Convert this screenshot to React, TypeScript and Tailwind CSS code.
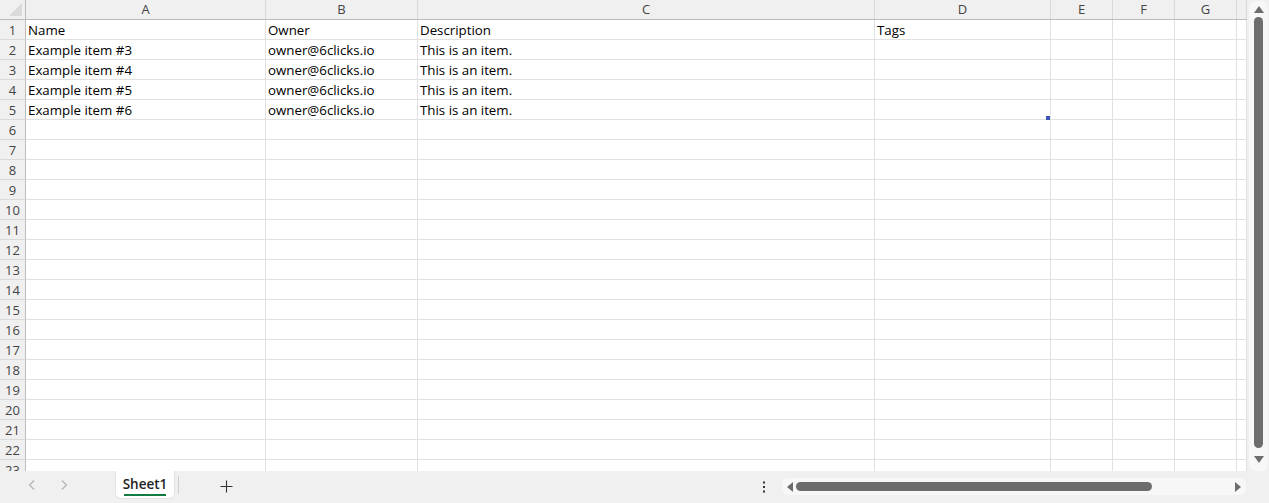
import React from "react";

const cols = [
  { l: "A", w: 240 },
  { l: "B", w: 152 },
  { l: "C", w: 457 },
  { l: "D", w: 176 },
  { l: "E", w: 62 },
  { l: "F", w: 62 },
  { l: "G", w: 62 },
  { l: "", w: 10 },
];

const data: string[][] = [
  ["Name", "Owner", "Description", "Tags"],
  ["Example item #3", "owner@6clicks.io", "This is an item.", ""],
  ["Example item #4", "owner@6clicks.io", "This is an item.", ""],
  ["Example item #5", "owner@6clicks.io", "This is an item.", ""],
  ["Example item #6", "owner@6clicks.io", "This is an item.", ""],
];

export default function App() {
  const rows = Array.from({ length: 23 }, (_, i) => i + 1);
  return (
    <div
      className="w-[1269px] h-[503px] bg-[#f0f0f0] flex flex-col overflow-hidden text-[#222]"
      style={{ fontFamily: '"Open Sans", "Noto Sans", sans-serif' }}
    >
      <div className="flex h-[471px]">
        {/* grid */}
        <div className="relative w-[1247px] h-[471px] overflow-hidden bg-white">
          {/* header row */}
          <div className="flex h-[20px] bg-[#f0f0f0] border-b border-[#bcbcbc]">
            <div className="w-[26px] h-[19px] border-r border-[#bcbcbc] flex items-end justify-end shrink-0">
              <div className="w-0 h-0 border-l-[13px] border-l-transparent border-b-[13px] border-b-[#dadada] mr-[3px] mb-[3px]" />
            </div>
            {cols.map((c, i) => (
              <div
                key={i}
                style={{ width: c.w }}
                className="h-[19px] shrink-0 border-r border-[#dadada] flex items-center justify-center pt-[1px] text-[13px] text-[#444]"
              >
                {c.l}
              </div>
            ))}
          </div>
          {rows.map((r) => (
            <div key={r} className="flex h-[20px]">
              <div className="w-[26px] h-[20px] shrink-0 bg-[#f0f0f0] border-r border-[#bcbcbc] border-b border-b-[#dadada] flex items-center justify-center pt-[2px] text-[13px] text-[#444]">
                {r}
              </div>
              {cols.map((c, i) => (
                <div
                  key={i}
                  style={{ width: c.w }}
                  className="h-[20px] shrink-0 border-r border-b border-[#e1e1e1] flex items-center pl-[2px] pt-[2px] text-[13.3px] text-black whitespace-nowrap overflow-hidden"
                >
                  {data[r - 1]?.[i] ?? ""}
                </div>
              ))}
            </div>
          ))}
          <div className="absolute left-[1046px] top-[116px] w-[4px] h-[4px] bg-[#3f55b5]" />
        </div>
        {/* vertical scrollbar */}
        <div className="w-[22px] h-[471px] bg-[#f0f0f0] pl-[2px] pt-[1px]">
          <div className="w-[19px] h-[470px] bg-[#f7f7f7] rounded-[6px] flex flex-col items-center">
            <div className="h-[16px] flex items-center justify-center">
              <div className="w-0 h-0 border-l-[5px] border-r-[5px] border-b-[7px] border-l-transparent border-r-transparent border-b-[#6d6d6d]" />
            </div>
            <div className="w-[9px] h-[431px] bg-[#6d6d6d] rounded-full" />
            <div className="flex-1 flex items-center justify-center">
              <div className="w-0 h-0 border-l-[5px] border-r-[5px] border-t-[7px] border-l-transparent border-r-transparent border-t-[#6d6d6d]" />
            </div>
          </div>
        </div>
      </div>
      {/* bottom bar */}
      <div className="flex h-[32px] items-start">
        <div className="w-[116px] h-[28px] flex items-center text-[#b0b0b0]">
          <svg className="ml-[26px]" width="12" height="12" viewBox="0 0 12 12" fill="none" stroke="#b4b4b4" strokeWidth="1.2">
            <path d="M8 1.5L3.5 6L8 10.5" />
          </svg>
          <svg className="ml-[20px]" width="12" height="12" viewBox="0 0 12 12" fill="none" stroke="#b4b4b4" strokeWidth="1.2">
            <path d="M4 1.5L8.5 6L4 10.5" />
          </svg>
        </div>
        <div className="w-[58px] h-[27px] bg-white rounded-b-[5px] flex flex-col items-center pt-[4px] shadow-[0_0_0_1px_#e4e4e4]">
          <span className="text-[13.5px] font-semibold text-[#222] leading-[18px]">Sheet1</span>
          <div className="w-[42px] h-[2px] bg-[#107c41] mt-[1px]" />
        </div>
        <div className="ml-[4px] mt-[5px] w-px h-[18px] bg-[#cfcfcf]" />
        <div className="ml-[41px] h-[30px] flex items-center">
          <svg width="13" height="13" viewBox="0 0 13 13" stroke="#333" strokeWidth="1.1">
            <path d="M6.5 0.5V12.5M0.5 6.5H12.5" />
          </svg>
        </div>
        <div className="ml-[529px] h-[32px] flex items-center">
          <svg width="4" height="12" viewBox="0 0 4 12" fill="#333">
            <rect x="1" y="0.5" width="2" height="2" />
            <rect x="1" y="5" width="2" height="2" />
            <rect x="1" y="9.5" width="2" height="2" />
          </svg>
        </div>
        <div className="ml-[16px] mt-[7px] w-[464px] h-[17px] bg-[#f7f7f7] rounded-[6px] flex items-center px-[5px]">
          <div className="w-0 h-0 border-t-[5px] border-b-[5px] border-r-[6px] border-t-transparent border-b-transparent border-r-[#6d6d6d]" />
          <div className="ml-[3px] w-[356px] h-[9px] bg-[#6d6d6d] rounded-full" />
          <div className="flex-1" />
          <div className="w-0 h-0 border-t-[5px] border-b-[5px] border-l-[6px] border-t-transparent border-b-transparent border-l-[#6d6d6d]" />
        </div>
      </div>
    </div>
  );
}
